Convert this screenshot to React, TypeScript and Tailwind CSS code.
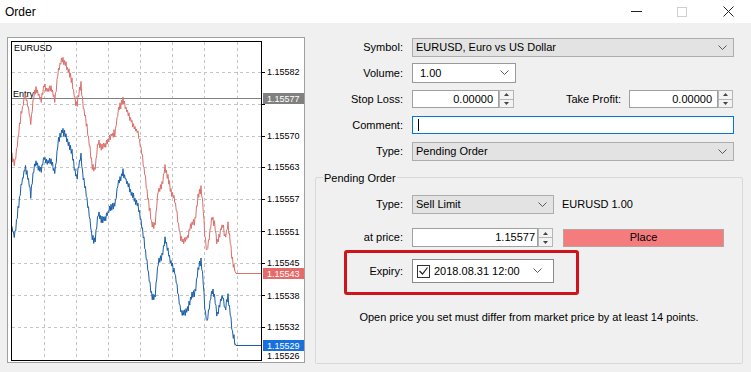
import React from "react";

const redKeys: [number, number][] = [
  [12, 156], [14.7, 165], [18, 138], [21, 115], [25, 95], [28, 105], [30.7, 123], [34, 95], [36, 90], [41, 100],
  [44, 85], [47, 90], [51, 88], [55, 101], [58, 71], [62, 58], [65, 63], [68, 70], [72, 81], [75, 100], [77, 106],
  [79, 91], [81, 85], [83, 105], [86, 121], [90, 148], [92, 166], [95, 170], [98, 141], [101, 148], [106, 145],
  [110, 136], [115, 133], [118, 111], [123, 100], [126, 108], [130, 118], [134, 126], [138, 133], [141, 148],
  [145, 175], [148, 198], [152, 226], [155, 225], [158, 191], [162, 185], [165, 166], [168, 178], [171, 191],
  [175, 201], [178, 221], [181, 240], [185, 241], [188, 236], [191, 225], [195, 221], [198, 198], [201, 188],
  [203, 205], [205, 238], [207, 251], [210, 231], [212, 218], [215, 226], [217, 245], [221, 228], [223, 225],
  [225, 238], [228, 225], [230, 238], [232, 258], [235, 271], [236, 273],
];

function rnd(x: number, seed: number) {
  const v = Math.sin(x * 12.9898 + seed) * 43758.5453;
  return v - Math.floor(v);
}

function buildPath(offset: number, seed: number, endY: number) {
  const pts: string[] = [];
  const start = redKeys[0][0];
  const end = redKeys[redKeys.length - 1][0];
  let seg = 0;
  let i = 0;
  for (let x = start; x <= end; x += 0.75) {
    while (seg < redKeys.length - 2 && x > redKeys[seg + 1][0]) seg++;
    const [x0, y0] = redKeys[seg];
    const [x1, y1] = redKeys[seg + 1];
    const t = Math.min(1, Math.max(0, (x - x0) / (x1 - x0)));
    let y = y0 + (y1 - y0) * t + offset;
    if (x < end - 1) y += (i % 2 === 0 ? -1 : 1) * (1 + rnd(i, seed) * 3);
    i++;
    pts.push(`${x.toFixed(2)},${y.toFixed(1)}`);
  }
  pts.push(`236,${endY}`);
  pts.push(`261,${endY}`);
  return "M" + pts.join(" L");
}

const hLines = [72, 104, 136, 167, 199, 231, 263, 295, 327];
const vLines = [44, 76, 108, 140, 172, 204, 237];
const priceLabels: [string, number][] = [
  ["1.15582", 72],
  ["1.15570", 136],
  ["1.15563", 167],
  ["1.15557", 199],
  ["1.15551", 232],
  ["1.15545", 263],
  ["1.15538", 296],
  ["1.15532", 327],
  ["1.15526", 356],
];

function Chart() {
  const red = buildPath(0, 1.7, 273.5);
  const blue = buildPath(72, 5.3, 345.5);
  return (
    <svg width="296" height="324" className="block">
      <g transform="translate(-8,-38)" fontFamily="'Liberation Sans', Arial, sans-serif" fontSize="9">
        {hLines.map((y) => (
          <line key={"h" + y} x1="12" x2="261" y1={y + 0.5} y2={y + 0.5} stroke="#c4c4c4" strokeDasharray="3 3" />
        ))}
        {vLines.map((x) => (
          <line key={"v" + x} x1={x + 0.5} x2={x + 0.5} y1="42" y2="360" stroke="#c4c4c4" strokeDasharray="3 3" />
        ))}
        {hLines.map((y) => (
          <line key={"t" + y} x1="262" x2="265" y1={y + 0.5} y2={y + 0.5} stroke="#000" />
        ))}
        <text x="14" y="51" fill="#000">EURUSD</text>
        <line x1="12" x2="262" y1="98.5" y2="98.5" stroke="#808080" />
        <text x="13" y="97" fill="#000">Entry</text>
        <path d={red} fill="none" stroke="#d9706c" strokeWidth="1" strokeLinejoin="miter" />
        <path d={blue} fill="none" stroke="#1a5ea8" strokeWidth="1" strokeLinejoin="miter" />
        <rect x="11.5" y="41.5" width="250" height="319" fill="none" stroke="#000" />
        {priceLabels.map(([t, y]) => (
          <text key={t} x="267" y={y + 3} fill="#000">{t}</text>
        ))}
        <rect x="263" y="93" width="42" height="11" fill="#808080" />
        <text x="267" y="102" fill="#fff">1.15577</text>
        <rect x="263" y="268" width="42" height="11" fill="#e66a6a" />
        <text x="267" y="277" fill="#fff">1.15543</text>
        <rect x="263" y="340" width="42" height="11" fill="#1770de" />
        <text x="267" y="349" fill="#fff">1.15529</text>
      </g>
    </svg>
  );
}

function Chevron() {
  return (
    <svg width="9" height="6" className="block">
      <path d="M0.5 0.5 L4.5 4.5 L8.5 0.5" fill="none" stroke="#5a5a5a" strokeWidth="1" />
    </svg>
  );
}

function Spinner() {
  return (
    <div className="flex h-full w-[15px] flex-col border border-[#b5b5b5] bg-[#f3f3f3]">
      <div className="flex flex-1 items-center justify-center border-b border-[#b5b5b5]">
        <svg width="5" height="3" className="block">
          <path d="M0 3 L2.5 0 L5 3 Z" fill="#444" />
        </svg>
      </div>
      <div className="flex flex-1 items-center justify-center">
        <svg width="5" height="3" className="block">
          <path d="M0 0 L2.5 3 L5 0 Z" fill="#444" />
        </svg>
      </div>
    </div>
  );
}

function GraySelect({ text, w, h }: { text: string; w: string; h: string }) {
  return (
    <div className={`flex items-center border border-[#adadad] bg-[#e3e3e3] pl-[3px] pr-[6px] ${w} ${h}`}>
      <span>{text}</span>
      <span className="ml-auto">
        <Chevron />
      </span>
    </div>
  );
}

export default function App() {
  return (
    <div className="w-[751px] h-[372px] overflow-hidden font-['Liberation_Sans',Arial,sans-serif] text-[11px] text-black">
      <div className="flex h-[23px] items-center bg-white">
        <span className="ml-[5px] text-[12px]">Order</span>
        <div className="ml-auto flex h-full">
          <div className="flex w-[46px] items-center justify-center">
            <div className="h-[1px] w-[11px] bg-[#222]" />
          </div>
          <div className="flex w-[46px] items-center justify-center">
            <div className="h-[10px] w-[10px] border border-[#cfcfcf]" />
          </div>
          <div className="flex w-[46px] items-center justify-center">
            <svg width="11" height="11" className="block">
              <path d="M0.5 0.5 L10.5 10.5 M10.5 0.5 L0.5 10.5" stroke="#222" strokeWidth="1" />
            </svg>
          </div>
        </div>
      </div>
      <div className="flex h-[349px] bg-[#f0f0f0]">
        <div className="ml-[7px] mt-[14px] h-[326px] w-[298px] border border-[#a0a0a0] bg-white">
          <Chart />
        </div>
        <div className="ml-[10px] flex w-[428px] flex-col pt-[15px]">
          <div className="flex h-[19px] items-center">
            <div className="w-[88px] text-right">Symbol:</div>
            <div className="ml-[9px]">
              <GraySelect text="EURUSD, Euro vs US Dollar" w="w-[322px]" h="h-[19px]" />
            </div>
          </div>
          <div className="mt-[6px] flex h-[20px] items-center">
            <div className="w-[88px] text-right">Volume:</div>
            <div className="ml-[9px] flex h-[20px] w-[104px] items-center border border-[#9a9a9a] bg-white pl-[7px] pr-[6px]">
              <span>1.00</span>
              <span className="ml-auto">
                <Chevron />
              </span>
            </div>
          </div>
          <div className="mt-[7px] flex h-[18px] items-center">
            <div className="w-[88px] text-right">Stop Loss:</div>
            <div className="ml-[9px] flex h-[18px]">
              <div className="flex h-full w-[87px] items-center justify-end border border-[#a0a0a0] bg-white pr-[5px]">0.00000</div>
              <Spinner />
            </div>
            <div className="w-[107px] text-right">Take Profit:</div>
            <div className="ml-[8px] flex h-[18px]">
              <div className="flex h-full w-[89px] items-center justify-end border border-[#a0a0a0] bg-white pr-[5px]">0.00000</div>
              <Spinner />
            </div>
          </div>
          <div className="mt-[8px] flex h-[18px] items-center">
            <div className="w-[88px] text-right">Comment:</div>
            <div className="ml-[9px] flex h-[18px] w-[322px] items-center border border-[#0078d7] bg-white">
              <div className="ml-[5px] h-[12px] w-[1px] bg-black" />
            </div>
          </div>
          <div className="mt-[8px] flex h-[19px] items-center">
            <div className="w-[88px] text-right">Type:</div>
            <div className="ml-[9px]">
              <GraySelect text="Pending Order" w="w-[322px]" h="h-[19px]" />
            </div>
          </div>
          <div className="relative mt-[16px] h-[187px] w-[428px] rounded-[2px] border border-[#d9d9d9] pt-[17px]">
            <div className="absolute left-[7px] top-[-8px] bg-[#f0f0f0] px-[1px]">Pending Order</div>
            <div className="flex h-[19px] items-center">
              <div className="w-[87px] text-right">Type:</div>
              <div className="ml-[9px]">
                <GraySelect text="Sell Limit" w="w-[142px]" h="h-[19px]" />
              </div>
              <div className="ml-[8px]">EURUSD 1.00</div>
            </div>
            <div className="mt-[14px] flex h-[19px] items-center">
              <div className="w-[87px] text-right">at price:</div>
              <div className="ml-[9px] flex h-[19px]">
                <div className="flex h-full w-[126px] items-center justify-end border border-[#a0a0a0] bg-white pr-[2px]">1.15577</div>
                <Spinner />
              </div>
              <div className="ml-[10px] flex h-[18px] w-[161px] items-center justify-center border border-[#b8a3a3] bg-[#f47c7c]">
                Place
              </div>
            </div>
            <div className="relative mt-[12px] flex h-[24px] items-center">
              <div className="w-[87px] text-right">Expiry:</div>
              <div className="ml-[9px] flex h-[24px] w-[142px] items-center border border-[#8a8a8a] bg-white">
                <div className="ml-[4px] flex h-[13px] w-[13px] items-center justify-center border border-[#333]">
                  <svg width="9" height="8" className="block">
                    <path d="M0.5 4 L3.5 7 L8.5 0.5" fill="none" stroke="#222" strokeWidth="1.2" />
                  </svg>
                </div>
                <span className="ml-[4px]">2018.08.31 12:00</span>
                <span className="ml-auto mr-[11px]">
                  <Chevron />
                </span>
              </div>
              <div className="absolute left-[28px] top-[-9px] h-[45px] w-[235px] rounded-[3px] border-[3px] border-[#d0141c]" />
            </div>
            <div className="mt-[26px] text-center">Open price you set must differ from market price by at least 14 points.</div>
          </div>
        </div>
      </div>
    </div>
  );
}
